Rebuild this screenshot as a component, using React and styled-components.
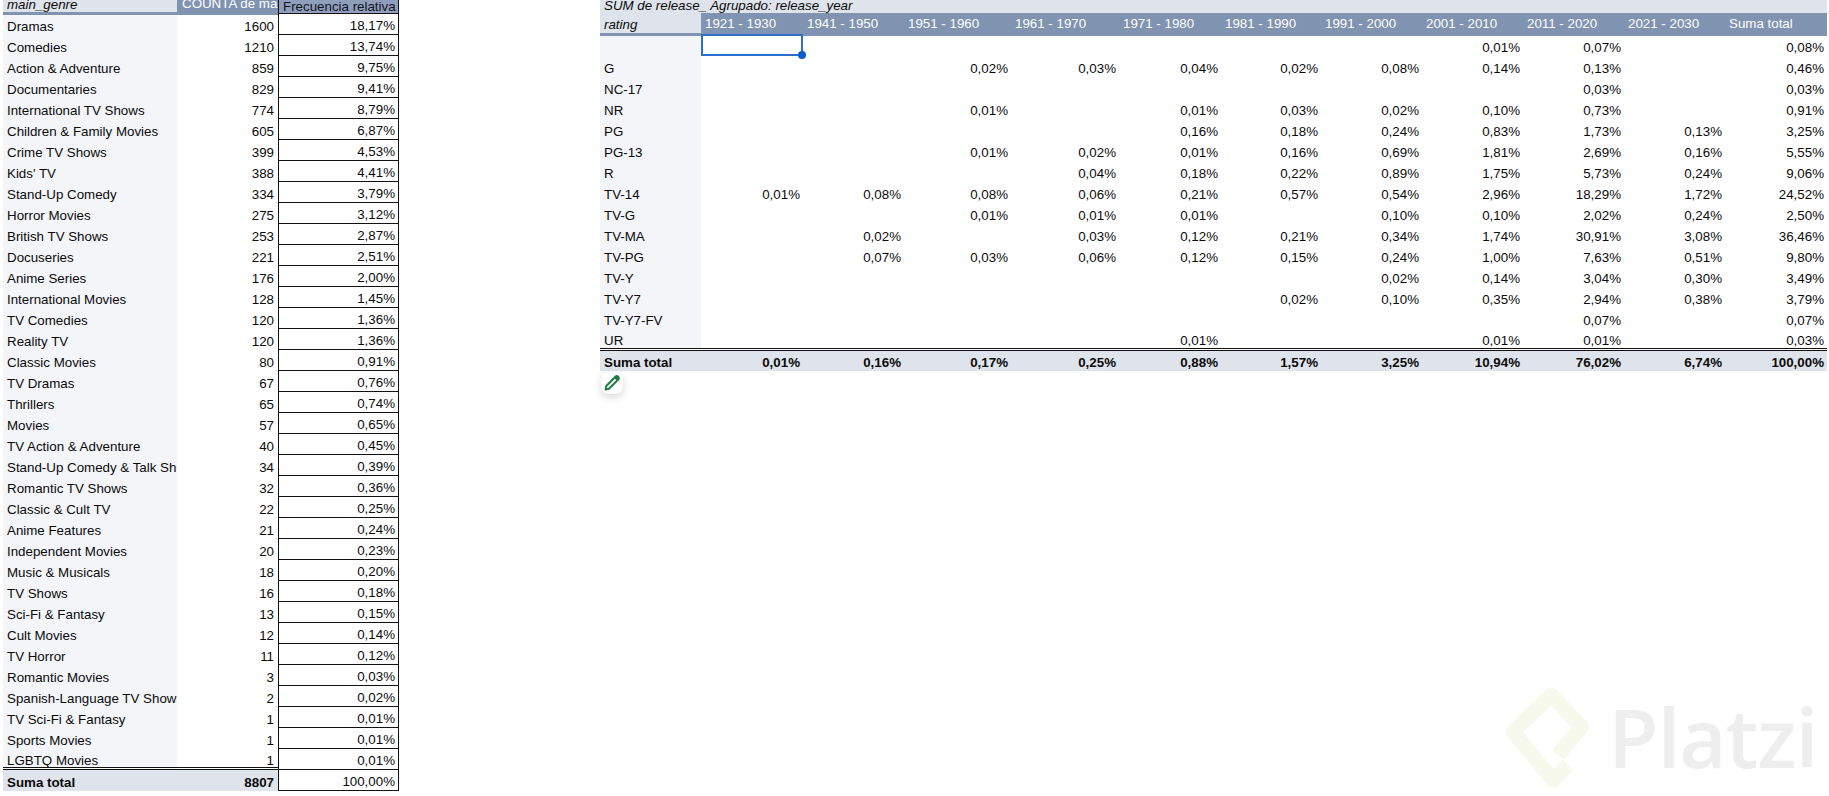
import React from 'react';
import styled, { createGlobalStyle } from 'styled-components';

const Global = createGlobalStyle`
  html, body { margin: 0; padding: 0; background: #fff; height: 796px; overflow: hidden; }
  body { font-family: "Liberation Sans", Arial, sans-serif; font-size: 13.33px; color: #0a0a0a; }
`;

const BLUE = '#8093b1';
const LIGHT = '#dfe4ec';
const PALE = '#f3f5f9';

const Page = styled.div`
  position: relative;
  width: 1829px;
  height: 796px;
  overflow: hidden;
  display: flex;
  align-items: flex-start;
  padding-left: 3px;
  gap: 201px;
  box-sizing: border-box;
`;

/* ---------- left table ---------- */
const LeftTable = styled.div`
  width: 396px;
  display: flex;
  flex-direction: column;
`;
const LeftRow = styled.div`
  display: grid;
  grid-template-columns: 174px 101px 121px;
  grid-template-rows: minmax(0, 1fr);
  height: ${p => p.$h || 21}px;
`;
const GenreHead = styled.div`
  background: ${LIGHT};
  border-bottom: 2px solid ${BLUE};
  box-shadow: 0 1px 0 ${BLUE};
  box-sizing: border-box;
  font-style: italic;
  padding-left: 4px;
  line-height: 9px;
  overflow: hidden;
  position: relative;
  z-index: 1;
`;
const CountHead = styled.div`
  background: ${BLUE};
  box-shadow: 0 1px 0 ${BLUE};
  color: #fff;
  padding-left: 5px;
  line-height: 8px;
  overflow: hidden;
  white-space: nowrap;
  position: relative;
  z-index: 1;
`;
const FreqHead = styled.div`
  background: #8f9eba;
  border: 1px solid #111;
  border-top: none;
  box-sizing: border-box;
  color: #10151f;
  padding-left: 4px;
  line-height: 13px;
  overflow: hidden;
  white-space: nowrap;
  position: relative;
  z-index: 2;
`;
const GenreCell = styled.div`
  background: ${p => (p.$total ? LIGHT : PALE)};
  font-weight: ${p => (p.$total ? 700 : 400)};
  padding: ${p => (p.$last ? 3 : 4)}px 0 0 4px;
  line-height: 18px;
  overflow: hidden;
  white-space: nowrap;
  box-sizing: border-box;
  ${p => p.$last && 'border-bottom: 3px double #111; line-height: 17px;'}
`;
const CountCell = styled.div`
  background: ${p => (p.$total ? LIGHT : '#fff')};
  font-weight: ${p => (p.$total ? 700 : 400)};
  padding: ${p => (p.$last ? 3 : 4)}px 4px 0 0;
  line-height: 18px;
  text-align: right;
  box-sizing: border-box;
  ${p => p.$last && 'border-bottom: 3px double #111; line-height: 17px;'}
`;
const FreqCell = styled.div`
  border: 1px solid #111;
  border-top: none;
  padding: 4px 3px 0 0;
  line-height: 16px;
  text-align: right;
  box-sizing: border-box;
  background: #fff;
`;

/* ---------- right table ---------- */
const PivotColumns = '101px 102px 101px 107px 108px 102px 100px 101px 101px 101px 101px 102px';
const Pivot = styled.div`
  width: 1227px;
  display: flex;
  flex-direction: column;
  position: relative;
`;
const PivotCaption = styled.div`
  height: 13px;
  background: ${LIGHT};
  font-style: italic;
  padding-left: 4px;
  line-height: 11px;
  white-space: nowrap;
  overflow: hidden;
`;
const PivotRow = styled.div`
  display: grid;
  grid-template-columns: ${PivotColumns};
  grid-template-rows: minmax(0, 1fr);
  height: ${p => p.$h || 21}px;
  box-sizing: border-box;
  background: ${p => (p.$total ? LIGHT : 'transparent')};
  font-weight: ${p => (p.$total ? 700 : 400)};
  ${p => p.$last && 'border-bottom: 3px double #111;'}
`;
const RatingHead = styled.div`
  background: ${LIGHT};
  border-bottom: 3px solid ${BLUE};
  box-sizing: border-box;
  font-style: italic;
  padding-left: 4px;
  line-height: 24px;
  overflow: hidden;
`;
const YearHead = styled.div`
  background: ${BLUE};
  color: #fff;
  padding-left: 4px;
  line-height: 22px;
  white-space: nowrap;
`;
const RatingCell = styled.div`
  background: ${p => (p.$total ? 'transparent' : PALE)};
  padding: ${p => (p.$tight ? 1 : 2)}px 0 0 4px;
  line-height: ${p => (p.$tight ? 20 : 19)}px;
  white-space: nowrap;
`;
const ValueCell = styled.div`
  position: relative;
  padding: ${p => (p.$tight ? 1 : 2)}px 3px 0 0;
  line-height: ${p => (p.$tight ? 20 : 19)}px;
  text-align: right;
`;
const Selection = styled.div`
  position: absolute;
  top: -2px;
  left: 0;
  width: 102px;
  height: 22px;
  border: 2px solid #2a70cc;
  box-sizing: border-box;
  z-index: 3;
`;
const Handle = styled.div`
  position: absolute;
  right: -5px;
  bottom: -5px;
  width: 8px;
  height: 8px;
  border-radius: 50%;
  background: #0b5bcc;
`;
const PencilButton = styled.div`
  position: absolute;
  top: 372px;
  left: 1px;
  width: 22px;
  height: 22px;
  border-radius: 8px;
  background: #fff;
  box-shadow: 0 3px 9px rgba(0, 0, 0, 0.16);
  display: flex;
  align-items: center;
  justify-content: center;
`;

/* ---------- watermark ---------- */
const Watermark = styled.div`
  position: absolute;
  left: 1498px;
  top: 680px;
  width: 330px;
  height: 112px;
  pointer-events: none;
`;
const WatermarkLogo = styled.svg`
  position: absolute;
  left: 0;
  top: 0;
`;
const WatermarkText = styled.div`
  position: absolute;
  left: 110px;
  top: 6px;
  font-family: "Open Sans", "Liberation Sans", sans-serif;
  font-size: 82px;
  font-weight: 600;
  line-height: 100px;
  color: #eeeeee;
  letter-spacing: -1px;
`;

const genres = [
  ['Dramas', 1600, '18,17%'], ['Comedies', 1210, '13,74%'], ['Action & Adventure', 859, '9,75%'],
  ['Documentaries', 829, '9,41%'], ['International TV Shows', 774, '8,79%'], ['Children & Family Movies', 605, '6,87%'],
  ['Crime TV Shows', 399, '4,53%'], ["Kids' TV", 388, '4,41%'], ['Stand-Up Comedy', 334, '3,79%'],
  ['Horror Movies', 275, '3,12%'], ['British TV Shows', 253, '2,87%'], ['Docuseries', 221, '2,51%'],
  ['Anime Series', 176, '2,00%'], ['International Movies', 128, '1,45%'], ['TV Comedies', 120, '1,36%'],
  ['Reality TV', 120, '1,36%'], ['Classic Movies', 80, '0,91%'], ['TV Dramas', 67, '0,76%'],
  ['Thrillers', 65, '0,74%'], ['Movies', 57, '0,65%'], ['TV Action & Adventure', 40, '0,45%'],
  ['Stand-Up Comedy & Talk Shows', 34, '0,39%'], ['Romantic TV Shows', 32, '0,36%'], ['Classic & Cult TV', 22, '0,25%'],
  ['Anime Features', 21, '0,24%'], ['Independent Movies', 20, '0,23%'], ['Music & Musicals', 18, '0,20%'],
  ['TV Shows', 16, '0,18%'], ['Sci-Fi & Fantasy', 13, '0,15%'], ['Cult Movies', 12, '0,14%'],
  ['TV Horror', 11, '0,12%'], ['Romantic Movies', 3, '0,03%'], ['Spanish-Language TV Shows', 2, '0,02%'],
  ['TV Sci-Fi & Fantasy', 1, '0,01%'], ['Sports Movies', 1, '0,01%'], ['LGBTQ Movies', 1, '0,01%'],
];

const years = ['1921 - 1930', '1941 - 1950', '1951 - 1960', '1961 - 1970', '1971 - 1980', '1981 - 1990', '1991 - 2000', '2001 - 2010', '2011 - 2020', '2021 - 2030', 'Suma total'];

const pivot = [
  ['', '', '', '', '', '', '', '', '0,01', '0,07', '', '0,08'],
  ['G', '', '', '0,02', '0,03', '0,04', '0,02', '0,08', '0,14', '0,13', '', '0,46'],
  ['NC-17', '', '', '', '', '', '', '', '', '0,03', '', '0,03'],
  ['NR', '', '', '0,01', '', '0,01', '0,03', '0,02', '0,10', '0,73', '', '0,91'],
  ['PG', '', '', '', '', '0,16', '0,18', '0,24', '0,83', '1,73', '0,13', '3,25'],
  ['PG-13', '', '', '0,01', '0,02', '0,01', '0,16', '0,69', '1,81', '2,69', '0,16', '5,55'],
  ['R', '', '', '', '0,04', '0,18', '0,22', '0,89', '1,75', '5,73', '0,24', '9,06'],
  ['TV-14', '0,01', '0,08', '0,08', '0,06', '0,21', '0,57', '0,54', '2,96', '18,29', '1,72', '24,52'],
  ['TV-G', '', '', '0,01', '0,01', '0,01', '', '0,10', '0,10', '2,02', '0,24', '2,50'],
  ['TV-MA', '', '0,02', '', '0,03', '0,12', '0,21', '0,34', '1,74', '30,91', '3,08', '36,46'],
  ['TV-PG', '', '0,07', '0,03', '0,06', '0,12', '0,15', '0,24', '1,00', '7,63', '0,51', '9,80'],
  ['TV-Y', '', '', '', '', '', '', '0,02', '0,14', '3,04', '0,30', '3,49'],
  ['TV-Y7', '', '', '', '', '', '0,02', '0,10', '0,35', '2,94', '0,38', '3,79'],
  ['TV-Y7-FV', '', '', '', '', '', '', '', '', '0,07', '', '0,07'],
  ['UR', '', '', '', '', '0,01', '', '', '0,01', '0,01', '', '0,03'],
];
const pivotTotal = ['0,01', '0,16', '0,17', '0,25', '0,88', '1,57', '3,25', '10,94', '76,02', '6,74', '100,00'];

export default function App() {
  return (
    <Page>
      <Global />
      <LeftTable>
        <LeftRow $h={14}>
          <GenreHead>main_genre</GenreHead>
          <CountHead>COUNTA de ma</CountHead>
          <FreqHead>Frecuencia relativa</FreqHead>
        </LeftRow>
        {genres.map(([name, n, pct], i) => {
          const last = i === genres.length - 1;
          return (
            <LeftRow key={name}>
              <GenreCell $last={last}>{name}</GenreCell>
              <CountCell $last={last}>{n}</CountCell>
              <FreqCell>{pct}</FreqCell>
            </LeftRow>
          );
        })}
        <LeftRow>
          <GenreCell $total>Suma total</GenreCell>
          <CountCell $total>8807</CountCell>
          <FreqCell>100,00%</FreqCell>
        </LeftRow>
      </LeftTable>

      <Pivot>
        <PivotCaption>SUM de release_ Agrupado: release_year</PivotCaption>
        <PivotRow $h={23}>
          <RatingHead>rating</RatingHead>
          {years.map(y => <YearHead key={y}>{y}</YearHead>)}
        </PivotRow>
        {pivot.map((row, r) => {
          const last = r === pivot.length - 1;
          return (
            <PivotRow key={r} $last={last}>
              <RatingCell $tight={last}>{row[0]}</RatingCell>
              {row.slice(1).map((v, c) => (
                <ValueCell key={c} $tight={last}>
                  {r === 0 && c === 0 && <Selection><Handle /></Selection>}
                  {v && `${v}%`}
                </ValueCell>
              ))}
            </PivotRow>
          );
        })}
        <PivotRow $total $h={20}>
          <RatingCell $total>Suma total</RatingCell>
          {pivotTotal.map((v, c) => <ValueCell key={c}>{v}%</ValueCell>)}
        </PivotRow>
        <PencilButton>
          <svg width="18" height="18" viewBox="0 0 18 18" fill="none">
            <path d="M2.6 15.6 L3.2 12 L12.4 2.8 C13.2 2 14.4 2 15.2 2.8 C16 3.6 16 4.8 15.2 5.6 L6 14.8 Z" stroke="#227a42" strokeWidth="2" strokeLinejoin="round" fill="#eef6f0" />
            <path d="M11.2 3.9 L14.1 6.8 L15.4 5.5 C16.2 4.7 16.2 3.4 15.4 2.6 C14.6 1.8 13.3 1.8 12.5 2.6 Z" fill="#227a42" />
          </svg>
        </PencilButton>
      </Pivot>

      <Watermark>
        <WatermarkLogo width="100" height="112" viewBox="0 0 100 112" fill="none">
          <path d="M60 75 L83.3 46.7 L53.3 15 L15 51.7 L55 100 L70 85" stroke="#f6f9ec" strokeWidth="15" strokeLinejoin="round" />
        </WatermarkLogo>
        <WatermarkText>Platzi</WatermarkText>
      </Watermark>
    </Page>
  );
}
